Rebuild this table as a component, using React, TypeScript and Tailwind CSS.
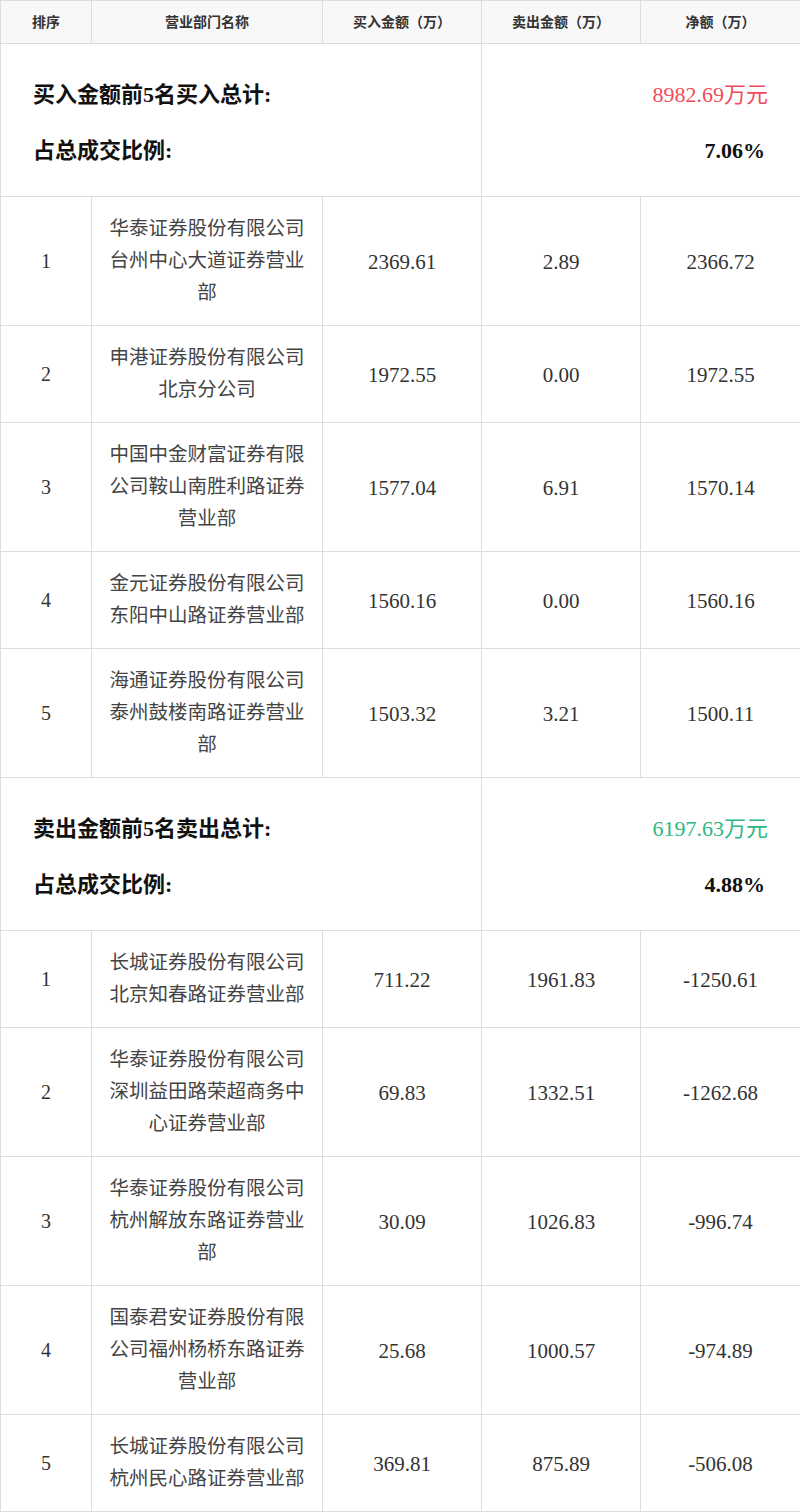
import React from 'react';

type Row = { rank: number; name: string; buy: string; sell: string; net: string };

const buyRows: Row[] = [
  { rank: 1, name: '华泰证券股份有限公司台州中心大道证券营业部', buy: '2369.61', sell: '2.89', net: '2366.72' },
  { rank: 2, name: '申港证券股份有限公司北京分公司', buy: '1972.55', sell: '0.00', net: '1972.55' },
  { rank: 3, name: '中国中金财富证券有限公司鞍山南胜利路证券营业部', buy: '1577.04', sell: '6.91', net: '1570.14' },
  { rank: 4, name: '金元证券股份有限公司东阳中山路证券营业部', buy: '1560.16', sell: '0.00', net: '1560.16' },
  { rank: 5, name: '海通证券股份有限公司泰州鼓楼南路证券营业部', buy: '1503.32', sell: '3.21', net: '1500.11' },
];

const sellRows: Row[] = [
  { rank: 1, name: '长城证券股份有限公司北京知春路证券营业部', buy: '711.22', sell: '1961.83', net: '-1250.61' },
  { rank: 2, name: '华泰证券股份有限公司深圳益田路荣超商务中心证券营业部', buy: '69.83', sell: '1332.51', net: '-1262.68' },
  { rank: 3, name: '华泰证券股份有限公司杭州解放东路证券营业部', buy: '30.09', sell: '1026.83', net: '-996.74' },
  { rank: 4, name: '国泰君安证券股份有限公司福州杨桥东路证券营业部', buy: '25.68', sell: '1000.57', net: '-974.89' },
  { rank: 5, name: '长城证券股份有限公司杭州民心路证券营业部', buy: '369.81', sell: '875.89', net: '-506.08' },
];

const font = "font-['Liberation_Serif','Noto_Sans_CJK_SC',serif]";
const cell = 'border border-[#dddddd] text-center align-middle';

function Summary({ label, total, ratio, color }: { label: string; total: string; ratio: string; color: string }) {
  return (
    <tr>
      <td colSpan={3} className="border border-[#dddddd] h-[153px] px-[32px] align-middle">
        <p className="text-[22px] leading-[32px] font-bold text-[#111] pt-[6px]">{label}</p>
        <p className="text-[22px] leading-[32px] font-bold text-[#111] mt-[24px]">占总成交比例:</p>
      </td>
      <td colSpan={2} className="border border-[#dddddd] px-[32px] text-right align-middle">
        <p className={`text-[22px] leading-[32px] pt-[6px] ${color}`}>{total}</p>
        <p className="text-[22px] leading-[32px] font-bold text-[#111] mt-[24px] pr-[3px]">{ratio}</p>
      </td>
    </tr>
  );
}

function DataRow({ r }: { r: Row }) {
  return (
    <tr className="text-[#333]">
      <td className={`${cell} text-[20px] py-[16px]`}>{r.rank}</td>
      <td className={`${cell} text-[19.5px] leading-[32px] py-[16px] px-[10px] text-[#444]`}>{r.name}</td>
      <td className={`${cell} text-[21px] pt-[3px]`}>{r.buy}</td>
      <td className={`${cell} text-[21px] pt-[3px]`}>{r.sell}</td>
      <td className={`${cell} text-[21px] pt-[3px]`}>{r.net}</td>
    </tr>
  );
}

export default function App() {
  return (
    <div className={`w-[800px] bg-white ${font}`}>
      <table className="w-[800px] border-collapse table-fixed">
        <colgroup>
          <col className="w-[91px]" />
          <col className="w-[231px]" />
          <col className="w-[159px]" />
          <col className="w-[159px]" />
          <col className="w-[160px]" />
        </colgroup>
        <thead>
          <tr className="bg-[#f8f8f8] h-[43px] text-[14px] font-bold text-[#333]">
            <th className={cell}>排序</th>
            <th className={cell}>营业部门名称</th>
            <th className={cell}>买入金额（万）</th>
            <th className={cell}>卖出金额（万）</th>
            <th className={cell}>净额（万）</th>
          </tr>
        </thead>
        <tbody>
          <Summary label="买入金额前5名买入总计:" total="8982.69万元" ratio="7.06%" color="text-[#f24a5a]" />
          {buyRows.map((r) => (
            <DataRow key={'b' + r.rank} r={r} />
          ))}
          <Summary label="卖出金额前5名卖出总计:" total="6197.63万元" ratio="4.88%" color="text-[#2db883]" />
          {sellRows.map((r) => (
            <DataRow key={'s' + r.rank} r={r} />
          ))}
        </tbody>
      </table>
    </div>
  );
}
